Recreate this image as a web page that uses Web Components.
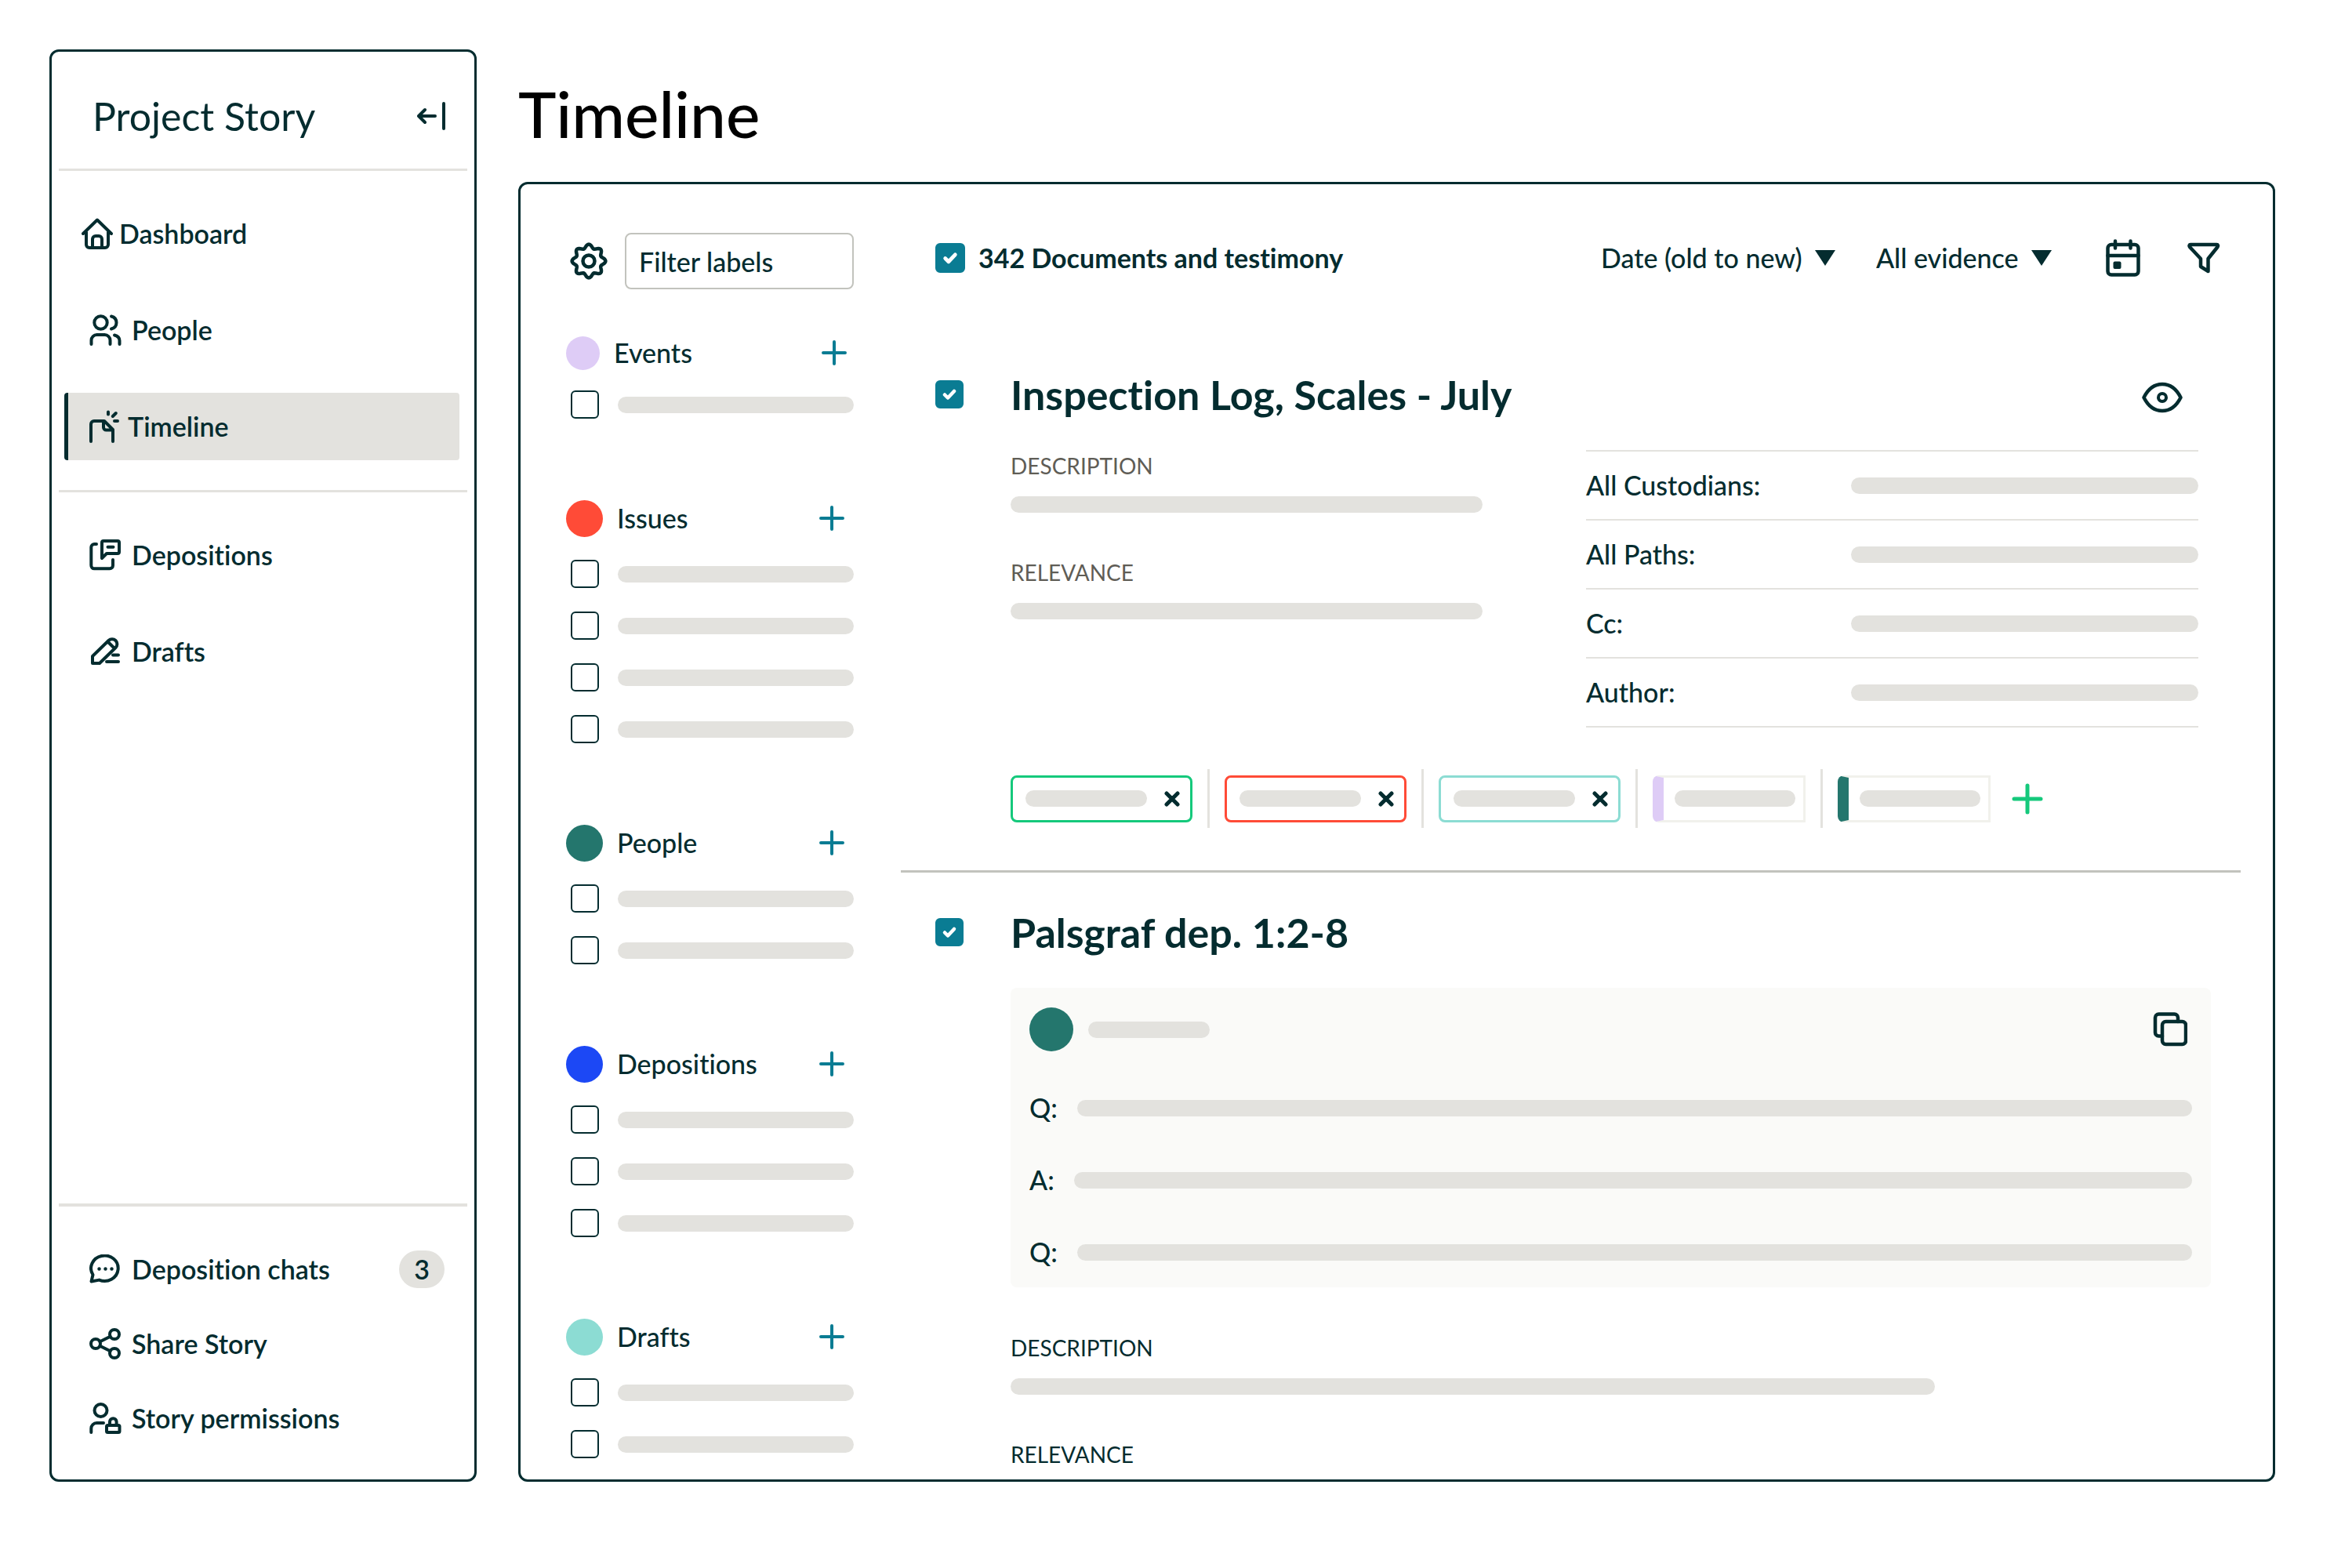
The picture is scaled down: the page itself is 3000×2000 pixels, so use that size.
<!DOCTYPE html>
<html lang="en">
<head>
<meta charset="utf-8">
<title>Project Story - Timeline</title>
<style>
  :root {
    --ink: #042c2f;
    --line: #e3e2de;
    --rule: #c2c3bd;
    --bar: #e3e2de;
    --teal: #0a7c93;
  }
  body {
    margin: 0;
    background: #fff;
    color: var(--ink);
    font: 500 34px/40px Lato, "Open Sans", sans-serif;
    font-variant-ligatures: none;
  }
</style>
</head>
<body>
<story-app></story-app>

<script>
// Small helper: every element here is a static template in an open shadow root
function define(name, html) {
  customElements.define(name, class extends HTMLElement {
    constructor() {
      super();
      this.attachShadow({ mode: "open" });
    }
    connectedCallback() {
      if (this.shadowRoot.childNodes.length) return;
      this.shadowRoot.innerHTML = typeof html === "function" ? html(this) : html;
    }
  });
}

// Scalloped outline with eight teeth
function gearPath() {
  const pts = [];
  for (let i = 0; i < 96; i++) {
    const a = (i / 96) * Math.PI * 2;
    const r = 19 + 2.4 * Math.cos(8 * a);
    pts.push((24 + r * Math.cos(a)).toFixed(2) + " " + (24 + r * Math.sin(a)).toFixed(2));
  }
  return "M" + pts.join("L") + "Z";
}

// name: [width, height, markup]
const ICONS = {
  collapse: [36, 36, `<path d="M34 2v32M23 18H2.500M10 10l-8 8 8 8"/>`],
  home: [40, 40, `<path d="M2 20 20 2.500 38 20M6 18v16a4 4 0 0 0 4 4h20a4 4 0 0 0 4-4V18M14 38V27a4 4 0 0 1 4-4h4a4 4 0 0 1 4 4v11"/>`],
  people: [41, 40, `<circle cx="14.500" cy="10.500" r="8.200"/><path d="M2.500 38v-5a7 7 0 0 1 7-7h10a7 7 0 0 1 7 7v5M28 2.500c4 1 6.500 4 6.500 8s-2.500 7-6.500 8M32 26.500c4 1 6.500 3.500 6.500 7V38"/>`],
  timeline: [38, 42, `<path d="M2 40V18a4 4 0 0 1 4-4h13l11 11v15M18 14v8a3.500 3.500 0 0 0 3.500 3.500H30M24 2.500V5.500M29.800 8l4-4M32 14h4"/>`],
  depositions: [41, 40, `<path d="M9 6H6.500A4 4 0 0 0 2.300 10v23a4 4 0 0 0 4 4.300H26a4 4 0 0 0 4-4V26M16 24V4a2 2 0 0 1 2-2h18a2 2 0 0 1 2 2v12a2 2 0 0 1-2 2H22ZM23.500 9.800h7"/>`],
  drafts: [41, 36, `<path d="M4 33v-9L24.500 4a6.300 6.300 0 0 1 9 9L13 33ZM23.500 5.500l7.500 7.500M30 22.500h7M22 31h15"/>`],
  chat: [41, 37, `<path d="M2.500 34.500 4.500 26A17.300 16.200 0 1 1 12.500 32.600Z"/><g fill="currentColor" stroke="none"><circle cx="12.500" cy="18.500" r="2.200"/><circle cx="20.500" cy="18.500" r="2.200"/><circle cx="28.500" cy="18.500" r="2.200"/></g>`],
  share: [41, 40, `<circle cx="32" cy="8" r="6"/><circle cx="8" cy="20" r="6"/><circle cx="32" cy="32" r="6"/><path d="M13.500 17.300 26.600 10.700M13.500 22.700l13.100 6.600"/>`],
  lock: [41, 40, `<circle cx="14.500" cy="10" r="8"/><path d="M2.300 38v-5a7 7 0 0 1 7-7H18"/><rect x="22" y="29" width="16.500" height="9" rx="1.500"/><path d="M26 29v-4.500a4.300 4.300 0 0 1 8.600 0V29"/>`],
  gear: [48, 48, `<path stroke-width="4.500" d="${gearPath()}"/><circle stroke-width="4.500" cx="24" cy="24" r="7.500"/>`],
  calendar: [44, 48, `<rect x="2.500" y="7" width="39" height="38.500" rx="4.500" stroke-width="4.500"/><path stroke-width="4.500" d="M2.500 21h39M12 2.500v9M31.500 2.500v9"/><rect x="9.500" y="28.500" width="10" height="9.500" rx="2" fill="currentColor" stroke="none"/>`],
  funnel: [42, 40, `<path stroke-width="4.500" d="M4 3h33.500c1.500 0 2 1.500 1 3L26.500 21v16L17 31V21L3 6C2 4.500 2.500 3 4 3Z"/>`],
  eye: [52, 40, `<path stroke-width="4.500" d="M2.500 20C8 9 16 3 26 3s18 6 23.500 17C44 31 36 37 26 37S8 31 2.500 20Z"/><circle cx="26" cy="20" r="5"/>`],
  copy: [44, 44, `<rect x="12" y="12" width="30" height="29" rx="4.500" stroke-width="4.500"/><path stroke-width="4.500" d="M32 12V7a4.500 4.500 0 0 0-4.500-4.500h-20A4.500 4.500 0 0 0 3 7v19a4.500 4.500 0 0 0 4.500 4.500H12"/>`],
  plus: [32, 32, `<path d="M16 2v28M2 16h28"/>`],
  bigplus: [40, 40, `<path stroke-width="5" d="M20 3v34M3 20h34"/>`],
  cross: [20, 20, `<path stroke-width="5" d="M3 3l14 14M17 3 3 17"/>`],
  triangle: [26, 20, `<path fill="currentColor" stroke="none" d="M0 0h26L13 20Z"/>`],
};

define("story-icon", (el) => {
  const [w, h, body] = ICONS[el.getAttribute("name")];
  return `
    <style>
      :host { display: block; flex: none; }
      svg { display: block; }
    </style>
    <svg width="${w}" height="${h}" viewBox="0 0 ${w} ${h}" fill="none" stroke="currentColor"
      stroke-width="4" stroke-linecap="round" stroke-linejoin="round" aria-hidden="true">${body}</svg>`;
});

// Grey placeholder line; fills its container unless the host is given a width
define("skeleton-bar", `
  <style>
    :host { display: block; height: 21px; border-radius: 11px; background: var(--bar); }
  </style>`);

define("story-check", (el) => `
  <style>
    :host { display: block; flex: none; width: 36px; height: 36px; }
    label { display: grid; width: 100%; height: 100%; }
    input {
      grid-area: 1 / 1; appearance: none; margin: 0; box-sizing: border-box;
      width: 100%; height: 100%;
      border: 2px solid var(--ink); border-radius: 6px; background: #fff;
    }
    input:checked { border-color: var(--teal); background: var(--teal); }
    svg { grid-area: 1 / 1; width: 100%; height: 100%; pointer-events: none; }
    input:not(:checked) + svg { display: none; }
  </style>
  <label>
    <input type="checkbox" aria-label="${el.getAttribute("label")}" ${el.hasAttribute("checked") ? "checked" : ""}>
    <svg viewBox="0 0 36 36" fill="none" stroke="#fff" stroke-width="4.500" stroke-linecap="round" stroke-linejoin="round">
      <path d="M12 18.500l4 4 8-8.500"/>
    </svg>
  </label>`);

define("icon-button", (el) => `
  <style>
    :host { display: block; flex: none; }
    button { display: block; border: 0; padding: 0; background: none; color: inherit; cursor: pointer; }
  </style>
  <button type="button" aria-label="${el.getAttribute("label")}"><story-icon name="${el.getAttribute("icon")}"></story-icon></button>`);

define("nav-item", (el) => `
  <style>
    :host { display: block; }
    a {
      display: flex; align-items: center; gap: 13px;
      height: var(--nav-height, 86px); box-sizing: border-box;
      padding: 0 19px 0 27px;
      border-left: 5px solid transparent; border-radius: 4px;
      color: inherit; text-decoration: none; font-weight: 600;
    }
    :host([active]) a { background: var(--line); border-left-color: var(--ink); gap: 11px; }
    :host([root]) a { padding-left: 17px; gap: 8px; }
    slot[name="badge"] { display: block; margin-left: auto; }
  </style>
  <a href="#"><story-icon name="${el.getAttribute("icon")}"></story-icon><slot></slot><slot name="badge"></slot></a>`);

define("side-nav", `
  <style>
    :host {
      display: flex; flex-direction: column; box-sizing: border-box;
      border: 3px solid var(--ink); border-radius: 12px;
    }
    header {
      display: flex; align-items: center; justify-content: space-between;
      padding: 52px 37px 37px 52px;
    }
    h2 { margin: 0; font-size: 50px; line-height: 60px; font-weight: 400; }
    hr { margin: 0 9px; border: 0; width: auto; height: 3px; background: var(--line); flex: none; }
    nav { display: flex; flex-direction: column; gap: 37px; padding: 37px 19px 38px 16px; }
    .foot { --nav-height: 57px; gap: 38px; padding: 51px 19px 50px 16px; }
    .end { margin-top: auto; height: 4px; }
    .badge {
      display: block; width: 58px; border-radius: 24px; background: var(--line);
      line-height: 48px; text-align: center;
    }
  </style>
  <header>
    <h2>Project Story</h2>
    <icon-button icon="collapse" label="Collapse sidebar"></icon-button>
  </header>
  <hr>
  <nav aria-label="Story">
    <nav-item icon="home" root>Dashboard</nav-item>
    <nav-item icon="people">People</nav-item>
    <nav-item icon="timeline" active>Timeline</nav-item>
  </nav>
  <hr>
  <nav aria-label="Work product">
    <nav-item icon="depositions">Depositions</nav-item>
    <nav-item icon="drafts">Drafts</nav-item>
  </nav>
  <hr class="end">
  <nav class="foot" aria-label="Sharing">
    <nav-item icon="chat">Deposition chats<span class="badge" slot="badge">3</span></nav-item>
    <nav-item icon="share">Share Story</nav-item>
    <nav-item icon="lock">Story permissions</nav-item>
  </nav>`);

// <label-group name="Issues" color="#ff4b37" rows="4">
define("label-group", (el) => {
  const name = el.getAttribute("name");
  let rows = "";
  for (let i = 1; i <= Number(el.getAttribute("rows")); i++) {
    rows += `<li><story-check label="${name} label ${i}"></story-check><skeleton-bar></skeleton-bar></li>`;
  }
  return `
    <style>
      :host { display: block; }
      header { display: flex; align-items: center; gap: 18px; height: 76px; padding-right: 12px; }
      .dot { width: 47px; height: 47px; border-radius: 50%; background: ${el.getAttribute("color")}; }
      h3 { margin: 0; font-size: 34px; font-weight: 500; }
      icon-button { margin-left: auto; color: var(--teal); }
      ul { list-style: none; margin: 0; padding: 0; }
      li { display: flex; align-items: center; gap: 24px; height: 66px; padding-left: 6px; }
      skeleton-bar { flex: 1; }
      :host([small]) header { height: 66px; padding-right: 9px; }
      :host([small]) .dot { width: 43px; height: 43px; }
    </style>
    <header>
      <span class="dot"></span>
      <h3>${name}</h3>
      <icon-button icon="plus" label="Add to ${name}"></icon-button>
    </header>
    <ul>${rows}</ul>`;
});

define("label-panel", `
  <style>
    :host { display: block; padding-top: 62px; }
    .filter { display: flex; align-items: center; gap: 22px; padding-left: 5px; margin-bottom: 48px; }
    input {
      flex: 1; min-width: 0; box-sizing: border-box; height: 72px; padding: 0 16px;
      border: 2px solid var(--rule); border-radius: 8px;
      font: inherit; color: inherit; background: #fff;
    }
    input::placeholder { color: inherit; opacity: 1; }
    .groups { display: flex; flex-direction: column; gap: 74px; }
  </style>
  <div class="filter">
    <icon-button icon="gear" label="Label settings"></icon-button>
    <input type="text" placeholder="Filter labels" aria-label="Filter labels">
  </div>
  <div class="groups">
    <label-group small name="Events" color="#deccf6" rows="1"></label-group>
    <label-group name="Issues" color="#ff4b37" rows="4"></label-group>
    <label-group name="People" color="#24766d" rows="2"></label-group>
    <label-group name="Depositions" color="#1c48f5" rows="3"></label-group>
    <label-group name="Drafts" color="#8cdcd3" rows="2"></label-group>
  </div>`);

define("drop-down", (el) => `
  <style>
    :host { display: block; }
    label { display: flex; align-items: center; gap: 16px; }
    select {
      appearance: none; border: 0; margin: 0; padding: 0; background: none;
      font: inherit; color: inherit;
    }
    story-icon { pointer-events: none; }
  </style>
  <label>
    <select aria-label="${el.getAttribute("label")}"><option>${el.getAttribute("value")}</option></select>
    <story-icon name="triangle"></story-icon>
  </label>`);

define("evidence-toolbar", `
  <style>
    :host { display: flex; align-items: center; height: 72px; padding: 0 26px 0 44px; }
    story-check { width: 38px; height: 38px; }
    strong { margin: 0 auto 0 17px; font-weight: 700; }
    .sorts { display: flex; gap: 52px; margin-right: 69px; }
    .tools { display: flex; align-items: center; gap: 60px; }
  </style>
  <story-check checked label="Select all"></story-check>
  <strong>342 Documents and testimony</strong>
  <div class="sorts">
    <drop-down label="Sort" value="Date (old to new)"></drop-down>
    <drop-down label="Evidence type" value="All evidence"></drop-down>
  </div>
  <div class="tools">
    <icon-button icon="calendar" label="Calendar"></icon-button>
    <icon-button icon="funnel" label="Filter"></icon-button>
  </div>`);

// Checkbox and heading, with the body indented below the heading
define("evidence-item", (el) => `
  <style>
    :host { display: block; padding: 0 38px 0 44px; }
    header { display: flex; align-items: center; height: 60px; margin-bottom: 41px; }
    h2 { margin: 0 auto 0 60px; font-size: 52px; line-height: 60px; font-weight: 700; }
    slot[name="action"] { display: block; padding-top: 8px; }
    .body { margin-left: 96px; }
  </style>
  <header>
    <story-check checked label="Select ${el.getAttribute("heading")}"></story-check>
    <h2>${el.getAttribute("heading")}</h2>
    <slot name="action"></slot>
  </header>
  <div class="body"><slot></slot></div>`);

define("field-block", (el) => `
  <style>
    :host { display: flex; flex-direction: column; gap: 19px; }
    h4 { margin: 0; font-size: 28px; line-height: 40px; font-weight: 400; }
  </style>
  <h4>${el.getAttribute("name")}</h4>
  <slot></slot>`);

define("meta-table", (el) => `
  <style>
    :host { display: block; }
    table { width: 100%; border-collapse: collapse; }
    th, td { height: 88px; box-sizing: border-box; padding: 0; border: solid var(--line); border-width: 2px 0; }
    th { width: 43%; text-align: left; font-weight: 500; }
    td { padding-left: 2px; }
  </style>
  <table>
    ${el.getAttribute("fields").split(",").map((f) => `
      <tr><th scope="row">${f}:</th><td><skeleton-bar></skeleton-bar></td></tr>`).join("")}
  </table>`);

// Outlined chips can be removed; "edge" chips only carry a coloured left edge
define("tag-chip", (el) => `
  <style>
    :host {
      display: flex; align-items: center; justify-content: space-between; box-sizing: border-box;
      height: 60px; width: 232px; padding: 0 13px 0 16px;
      border: 3px solid ${el.getAttribute("color")}; border-radius: 8px;
    }
    :host([edge]) {
      width: 195px; padding: 0 10px 0 14px;
      border-color: #f1f1ec; border-radius: 8px 0 0 8px;
      border-left: 14px solid ${el.getAttribute("color")};
    }
    skeleton-bar { width: 155px; }
  </style>
  <skeleton-bar></skeleton-bar>
  ${el.hasAttribute("edge") ? "" : `<icon-button icon="cross" label="Remove tag"></icon-button>`}`);

define("tag-row", `
  <style>
    :host { display: flex; align-items: center; gap: 19px; }
    i { width: 3px; height: 75px; background: var(--line); }
    .add { margin-left: 8px; color: #15c97c; }
  </style>
  <tag-chip color="#15c97c"></tag-chip><i></i>
  <tag-chip color="#ff4b37"></tag-chip><i></i>
  <tag-chip color="#8cdcd3"></tag-chip><i></i>
  <tag-chip edge color="#deccf6"></tag-chip><i></i>
  <tag-chip edge color="#24766d"></tag-chip>
  <icon-button class="add" icon="bigplus" label="Add tag"></icon-button>`);

define("transcript-card", `
  <style>
    :host {
      display: flex; flex-direction: column; gap: 52px; padding: 25px 24px;
      border-radius: 8px; background: #fafaf8;
    }
    header { display: flex; align-items: center; gap: 19px; height: 56px; }
    .avatar { width: 56px; height: 56px; border-radius: 50%; background: #24766d; }
    header skeleton-bar { width: 155px; }
    header icon-button { margin: 0 6px 0 auto; }
    .line { display: flex; align-items: center; gap: 25px; }
    .line skeleton-bar { flex: 1; }
  </style>
  <header>
    <span class="avatar"></span>
    <skeleton-bar></skeleton-bar>
    <icon-button icon="copy" label="Copy testimony"></icon-button>
  </header>
  <div class="line">Q:<skeleton-bar></skeleton-bar></div>
  <div class="line">A:<skeleton-bar></skeleton-bar></div>
  <div class="line">Q:<skeleton-bar></skeleton-bar></div>`);

define("evidence-list", `
  <style>
    :host { display: block; min-width: 0; padding-top: 58px; }
    evidence-toolbar { margin-bottom: 108px; }
    .summary { display: grid; grid-template-columns: 602fr 781fr; gap: 132px; padding-right: 16px; }
    .fields { display: flex; flex-direction: column; gap: 56px; }
    .muted { color: #5f5d56; }
    tag-row { margin-top: 53px; }
    hr { margin: 54px 0 46px; border: 0; height: 3px; background: var(--rule); }
    .eye { margin-right: 36px; }
    transcript-card { margin-bottom: 57px; }
    .short { width: 77%; }
  </style>
  <evidence-toolbar></evidence-toolbar>
  <evidence-item heading="Inspection Log, Scales - July">
    <icon-button class="eye" slot="action" icon="eye" label="Preview"></icon-button>
    <div class="summary">
      <div class="fields muted">
        <field-block name="DESCRIPTION"><skeleton-bar></skeleton-bar></field-block>
        <field-block name="RELEVANCE"><skeleton-bar></skeleton-bar></field-block>
      </div>
      <meta-table fields="All Custodians,All Paths,Cc,Author"></meta-table>
    </div>
    <tag-row></tag-row>
  </evidence-item>
  <hr>
  <evidence-item heading="Palsgraf dep. 1:2-8">
    <transcript-card></transcript-card>
    <div class="fields">
      <field-block name="DESCRIPTION"><skeleton-bar class="short"></skeleton-bar></field-block>
      <field-block name="RELEVANCE"></field-block>
    </div>
  </evidence-item>`);

define("story-app", `
  <style>
    :host {
      display: grid; grid-template-columns: 545px minmax(0, 1fr); gap: 53px;
      box-sizing: border-box; min-height: 100vh; padding: 63px 98px 110px 63px;
    }
    main { display: flex; flex-direction: column; }
    h1 { margin: 33px 0 40px; font-size: 82px; line-height: 96px; font-weight: 500; color: #000; }
    .panel {
      flex: 1; display: grid; grid-template-columns: 367px minmax(0, 1fr); gap: 60px;
      padding: 0 41px 0 58px; overflow: hidden;
      border: 3px solid var(--ink); border-radius: 12px;
    }
  </style>
  <side-nav></side-nav>
  <main>
    <h1>Timeline</h1>
    <div class="panel">
      <label-panel></label-panel>
      <evidence-list></evidence-list>
    </div>
  </main>`);
</script>
</body>
</html>
